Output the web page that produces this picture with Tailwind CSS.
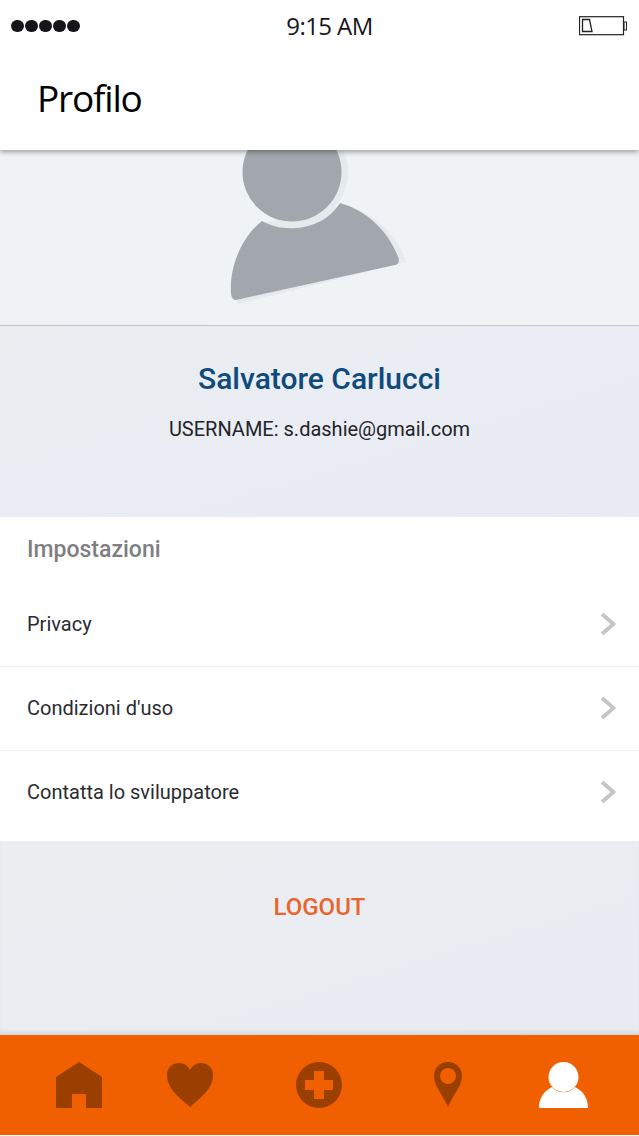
<!doctype html>
<html><head><meta charset="utf-8"><script src="https://cdn.jsdelivr.net/npm/@tailwindcss/browser@4"></script></head>
<body class="m-0 bg-white">
<div class="w-[639px] h-[1136px] flex flex-col overflow-hidden font-['Roboto',sans-serif] bg-white">
  <header class="relative z-10 h-[150px] bg-white shrink-0 shadow-[0_2px_5px_rgba(0,0,0,0.35)] font-['Open_Sans',sans-serif] text-[#16161a]">
    <div class="h-[52px] flex items-center justify-between pl-[11px] pr-[12px]">
      <div class="flex gap-[1px]">
        <span class="w-[13px] h-[12px] rounded-full bg-[#16161a]"></span>
        <span class="w-[13px] h-[12px] rounded-full bg-[#16161a]"></span>
        <span class="w-[13px] h-[12px] rounded-full bg-[#16161a]"></span>
        <span class="w-[13px] h-[12px] rounded-full bg-[#16161a]"></span>
        <span class="w-[13px] h-[12px] rounded-full bg-[#16161a]"></span>
      </div>
      <span class="text-[24px] leading-none tracking-[-0.6px]">9:15 AM</span>
      <svg width="48" height="20" viewBox="0 0 48 20" fill="none" stroke="#222">
        <rect x="0.5" y="0.7" width="44" height="18" stroke-width="1.2"/>
        <path d="M3.5 3.5H10.5L13 15.5H3.5Z" stroke-width="1.3"/>
        <rect x="45" y="6" width="2.5" height="8" stroke-width="1"/>
      </svg>
    </div>
    <h1 class="pl-[37px] mt-[20px] text-[37px] leading-[52px] tracking-[-1.2px] font-normal text-black">Profilo</h1>
  </header>

  <section class="h-[176px] shrink-0 bg-[#eff3f5] border-b border-[#c2c6c9]">
    <svg width="639" height="176" viewBox="0 150 639 176" class="block">
      <path d="M346 205C375 214 398 236 406 262L238 304C233 270 240 240 258 224Z" fill="#e6eaec"/>
      <circle cx="296" cy="172" r="52" fill="#e6eaec"/>
      <circle cx="292" cy="172" r="49.5" fill="#a2a7ae"/>
      <path d="M340 203C371 212 390 235 398.500 258Q400 264 395 265L236 300Q232 300 231 294C229 265 243 236 262 221C282 233 322 232 340 203Z" fill="#a2a7ae"/>
    </svg>
  </section>

  <section class="h-[191px] shrink-0 bg-gradient-to-br from-[#eaeef1] to-[#e9ebf4] flex flex-col items-center">
    <h2 class="mt-[33px] text-[30px] leading-[40px] font-medium text-[#0f4a7c]">Salvatore Carlucci</h2>
    <p class="mt-[17px] text-[20px] leading-[26px] text-[#222427]">USERNAME: s.dashie@gmail.com</p>
  </section>

  <section class="h-[324px] shrink-0 bg-white">
    <h3 class="pl-[27px] pt-[17px] text-[23px] leading-[32px] font-medium text-[#7e7e83]">Impostazioni</h3>
    <ul class="mt-[17px] text-[20px] text-[#2b2b30]">
      <li class="h-[84px] pl-[27px] pr-[23px] flex items-center justify-between border-b border-[#f1f1f3] pb-[2px]">
        <span>Privacy</span>
        <svg width="16" height="24" viewBox="0 0 16 24" fill="none" stroke="#c5c5c9" stroke-width="3.800"><path d="M2 2L13.500 12L2 22"/></svg>
      </li>
      <li class="h-[84px] pl-[27px] pr-[23px] flex items-center justify-between border-b border-[#f1f1f3] pb-[2px]">
        <span>Condizioni d'uso</span>
        <svg width="16" height="24" viewBox="0 0 16 24" fill="none" stroke="#c5c5c9" stroke-width="3.800"><path d="M2 2L13.500 12L2 22"/></svg>
      </li>
      <li class="h-[83px] pl-[27px] pr-[23px] flex items-center justify-between pb-[2px]">
        <span>Contatta lo sviluppatore</span>
        <svg width="16" height="24" viewBox="0 0 16 24" fill="none" stroke="#c5c5c9" stroke-width="3.800"><path d="M2 2L13.500 12L2 22"/></svg>
      </li>
    </ul>
  </section>

  <section class="h-[194px] shrink-0 bg-gradient-to-br from-[#ebeef0] to-[#e9ebf3] flex justify-center pt-[50px] shadow-[inset_0_-5px_5px_-3px_rgba(0,0,0,0.12)]">
    <span class="text-[24px] leading-[32px] font-medium text-[#e8652b]">LOGOUT</span>
  </section>

  <nav class="h-[100px] shrink-0 bg-[#f06000] flex items-start pl-[56px] pt-[27px]">
    <svg width="46" height="46" viewBox="0 0 46 46" fill="#9b3f00"><path d="M23 0L46 15V46H30V32H16V46H0V15Z"/></svg>
    <svg class="ml-[65px]" width="46" height="46" viewBox="0 0 46 46" fill="#9b3f00"><path d="M23 45C13 36 0 27 0 13C0 5 6 1 12 1C17 1 21 4 23 8C25 4 29 1 34 1C40 1 46 5 46 13C46 27 33 36 23 45Z"/></svg>
    <svg class="ml-[83px]" width="46" height="46" viewBox="0 0 46 46"><circle cx="23" cy="23" r="23" fill="#9b3f00"/><path d="M18 9H28V18H37V28H28V37H18V28H9V18H18Z" fill="#f06000"/></svg>
    <svg class="ml-[92px]" width="28" height="46" viewBox="0 0 28 46"><path fill-rule="evenodd" d="M14 0C22 0 28 6 28 14C28 24 19 33 14 45C9 33 0 24 0 14C0 6 6 0 14 0ZM14 6A8 8 0 1 0 14 22A8 8 0 1 0 14 6Z" fill="#9b3f00"/></svg>
    <svg class="ml-[77px]" width="49" height="46" viewBox="0 0 49 46" fill="#fff"><circle cx="24.500" cy="15" r="15"/><path d="M0 46C0 36 5 29 13 25C18 32 31 32 36 25C44 29 49 36 49 46Z"/></svg>
  </nav>
</div>
</body></html>
